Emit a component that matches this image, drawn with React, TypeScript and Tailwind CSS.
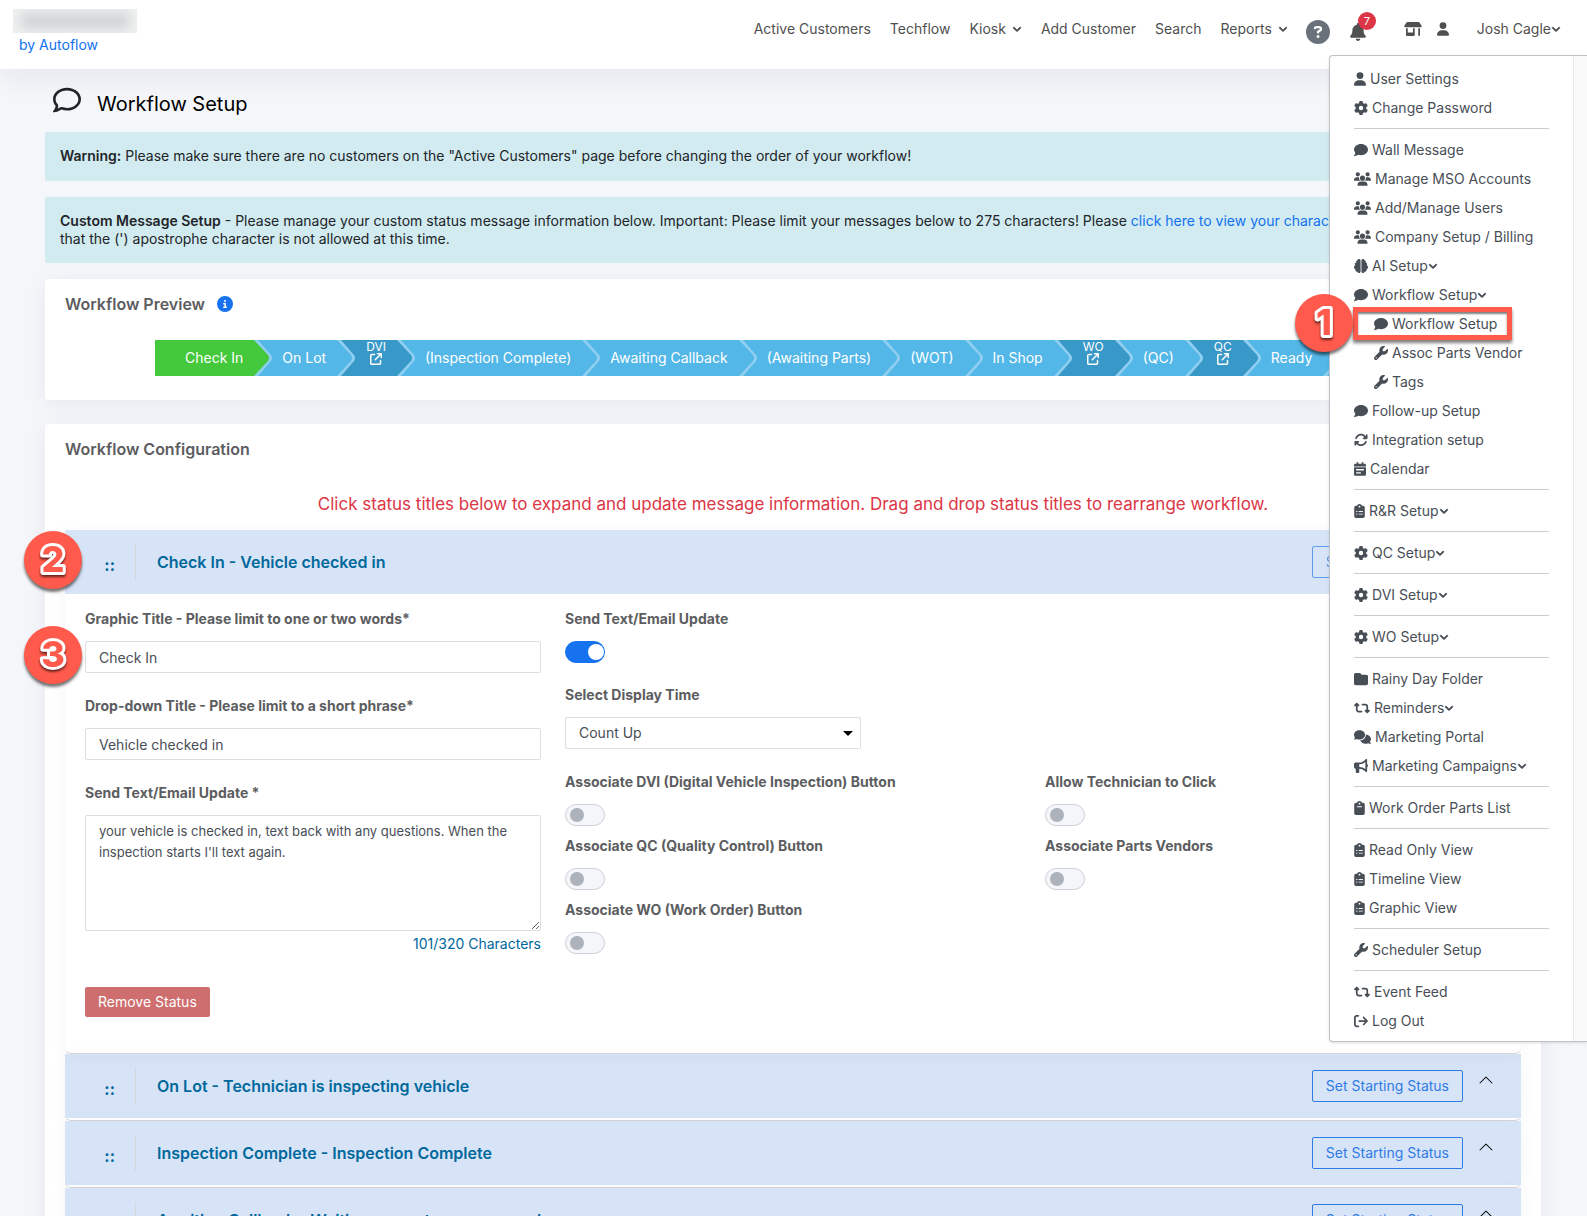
import { useState } from "react";
import type { ReactNode } from "react";
import type { IconType } from "react-icons";
import {
  FaAngleDown,
  FaArrowRightFromBracket,
  FaArrowsRotate,
  FaArrowUpRightFromSquare,
  FaBell,
  FaBrain,
  FaBullhorn,
  FaCircleInfo,
  FaCircleQuestion,
  FaClipboard,
  FaClipboardList,
  FaComment,
  FaComments,
  FaFolder,
  FaGear,
  FaRegComment,
  FaRetweet,
  FaShop,
  FaUser,
  FaUsers,
  FaWrench,
} from "react-icons/fa6";
import { BsChevronUp } from "react-icons/bs";

function CalendarIcon({ className }: { className?: string }) {
  return (
    <svg viewBox="0 0 448 512" fill="currentColor" className={className}>
      <path d="M96 0h64v64h128V0h64v64h48c26 0 48 22 48 48v48H0v-48c0-26 22-48 48-48h48z" />
      <path
        fillRule="evenodd"
        d="M0 192h448v272c0 26-22 48-48 48H48c-26 0-48-22-48-48zM80 260v48h288v-48zM80 376v48h176v-48z"
      />
    </svg>
  );
}

type MenuEntry = {
  label: string;
  icon: IconType | typeof CalendarIcon;
  width?: string; // icon width, square when not given
  caret?: boolean;
  sub?: boolean;
  step?: number;
};

// each inner list is a group, groups are separated by a rule
const menuGroups: MenuEntry[][] = [
  [
    { label: "User Settings", icon: FaUser, width: "w-3" },
    { label: "Change Password", icon: FaGear },
  ],
  [
    { label: "Wall Message", icon: FaComment },
    { label: "Manage MSO Accounts", icon: FaUsers, width: "w-[17px]" },
    { label: "Add/Manage Users", icon: FaUsers, width: "w-[17px]" },
    { label: "Company Setup / Billing", icon: FaUsers, width: "w-[17px]" },
    { label: "AI Setup", icon: FaBrain, caret: true },
    { label: "Workflow Setup", icon: FaComment, caret: true },
    { label: "Workflow Setup", icon: FaComment, sub: true, step: 1 },
    { label: "Assoc Parts Vendor", icon: FaWrench, sub: true },
    { label: "Tags", icon: FaWrench, sub: true },
    { label: "Follow-up Setup", icon: FaComment },
    { label: "Integration setup", icon: FaArrowsRotate },
    { label: "Calendar", icon: CalendarIcon, width: "w-3" },
  ],
  [{ label: "R&R Setup", icon: FaClipboardList, width: "w-[11px]", caret: true }],
  [{ label: "QC Setup", icon: FaGear, caret: true }],
  [{ label: "DVI Setup", icon: FaGear, caret: true }],
  [{ label: "WO Setup", icon: FaGear, caret: true }],
  [
    { label: "Rainy Day Folder", icon: FaFolder },
    { label: "Reminders", icon: FaRetweet, width: "w-4", caret: true },
    { label: "Marketing Portal", icon: FaComments, width: "w-[17px]" },
    { label: "Marketing Campaigns", icon: FaBullhorn, caret: true },
  ],
  [{ label: "Work Order Parts List", icon: FaClipboard, width: "w-[11px]" }],
  [
    { label: "Read Only View", icon: FaClipboardList, width: "w-[11px]" },
    { label: "Timeline View", icon: FaClipboardList, width: "w-[11px]" },
    { label: "Graphic View", icon: FaClipboardList, width: "w-[11px]" },
  ],
  [{ label: "Scheduler Setup", icon: FaWrench }],
  [
    { label: "Event Feed", icon: FaRetweet, width: "w-4" },
    { label: "Log Out", icon: FaArrowRightFromBracket },
  ],
];

const navLinks = [
  { label: "Active Customers" },
  { label: "Techflow" },
  { label: "Kiosk", caret: true },
  { label: "Add Customer" },
  { label: "Search" },
  { label: "Reports", caret: true },
];

const steps = [
  { label: "Check In", kind: "active" },
  { label: "On Lot", kind: "normal" },
  { label: "DVI", kind: "link" },
  { label: "(Inspection Complete)", kind: "normal" },
  { label: "Awaiting Callback", kind: "normal" },
  { label: "(Awaiting Parts)", kind: "normal" },
  { label: "(WOT)", kind: "normal" },
  { label: "In Shop", kind: "normal" },
  { label: "WO", kind: "link" },
  { label: "(QC)", kind: "normal" },
  { label: "QC", kind: "link" },
  { label: "Ready", kind: "normal" },
];

const stepBg: Record<string, string> = {
  active: "bg-[#43c93b] text-[#43c93b] pl-[30px]",
  normal: "bg-[#53b7e8] text-[#53b7e8] pl-7",
  link: "bg-[#3898c8] text-[#3898c8] pl-[29px]",
};

function Marker({ n, className }: { n: number; className: string }) {
  return (
    <span
      className={`absolute z-20 size-[58px] rounded-full bg-[#ff5a4b] shadow-[0_3px_3px_rgba(0,0,0,0.55)] ${className}`}
    >
      <svg viewBox="0 0 58 58" className="size-full drop-shadow-[0_2px_1px_rgba(0,0,0,0.6)]">
        <text
          x="29"
          y="41"
          textAnchor="middle"
          fill="#ff5a4b"
          stroke="#fff"
          strokeWidth="6"
          strokeLinejoin="round"
          paintOrder="stroke"
          className="text-[36px] font-extrabold"
        >
          {n}
        </text>
      </svg>
    </span>
  );
}

function MenuItem({ label, icon: Icon, width = "w-3.5", caret, sub, step }: MenuEntry) {
  return (
    <li className={`relative ${sub ? "pl-5" : ""}`}>
      <a href="#" className="flex items-center gap-1 py-1 leading-[21px] whitespace-nowrap">
        <Icon className={`h-3.5 shrink-0 ${width}`} />
        <span className="flex items-center">
          {label}
          {caret && <FaAngleDown className="size-2.5 stroke-current stroke-[40px]" />}
        </span>
      </a>
      {step && (
        <>
          <span className="absolute -inset-y-0.5 -left-px w-[159px] border-[5px] border-[#ff5a4b] shadow-[0_3px_3px_rgba(0,0,0,0.5),inset_0_2px_2px_rgba(0,0,0,0.5)]" />
          <Marker n={step} className="-top-[15px] -left-[59px]" />
        </>
      )}
    </li>
  );
}

function UserMenu() {
  return (
    <div className="absolute top-[55px] right-0 z-10 flex rounded-l-sm border border-r-0 border-[#bfc2c6] bg-white text-[#484e56] shadow-sm">
      <nav className="w-[243px] px-6 pt-2 pb-1.5">
        {menuGroups.map((group, i) => (
          <ul key={i} className={i > 0 ? "mt-1.5 border-t border-[#cbced1] pt-1.5" : ""}>
            {group.map((entry, j) => (
              <MenuItem key={j} {...entry} />
            ))}
          </ul>
        ))}
      </nav>
      <div className="w-3.5 border-l border-[#e8e8e8] bg-[#fafafa]" />
    </div>
  );
}

function Header() {
  return (
    <header className="relative z-10 flex h-[69px] justify-between bg-white shadow-[0_8px_30px_rgba(20,25,60,0.07)]">
      <div className="pt-[9px] pl-[13px]">
        <div className="h-6 w-[124px] overflow-hidden bg-[#eff0f0]">
          <div className="mx-2 my-1 h-4 bg-[#d0d3d6] blur-[6px]" />
        </div>
        <a href="#" className="block pl-1.5 leading-6 text-[#1271f0]">
          by Autoflow
        </a>
      </div>

      <div className="flex items-start pt-[19px] pr-[26px] text-[#505050]">
        <nav className="flex gap-[19px] leading-5">
          {navLinks.map((link) => (
            <a key={link.label} href="#" className="flex items-center gap-1.5">
              {link.label}
              {link.caret && <FaAngleDown className="size-2.5 stroke-current stroke-[40px]" />}
            </a>
          ))}
        </nav>
        <button type="button" aria-label="Help" className="ml-[18px] pt-px text-[#69727b]">
          <FaCircleQuestion className="size-6" />
        </button>
        <button type="button" aria-label="Notifications" className="relative ml-5 pt-1">
          <FaBell className="h-[18px] w-4" />
          <span className="absolute -top-[7px] left-2 flex size-[18px] items-center justify-center rounded-full bg-[#dc3545] text-[11px] leading-none text-white">
            7
          </span>
        </button>
        <a href="#" aria-label="Shop" className="ml-[38px] pt-[3px]">
          <FaShop className="h-3.5 w-[18px]" />
        </a>
        <a href="#" aria-label="Profile" className="ml-[15px] pt-[3px]">
          <FaUser className="h-3.5 w-3" />
        </a>
        <button type="button" className="ml-7 flex items-center leading-5">
          Josh Cagle
          <FaAngleDown className="size-2.5 stroke-current stroke-[40px]" />
        </button>
      </div>
      <UserMenu />
    </header>
  );
}

function Step({ label, kind }: { label: string; kind: string }) {
  return (
    <li className={`relative flex justify-center pr-[11px] ${stepBg[kind]}`}>
      {kind === "link" ? (
        <a href="#" className="flex flex-col items-center text-xs leading-[13px] text-white">
          {label}
          <FaArrowUpRightFromSquare className="size-3" />
        </a>
      ) : (
        <span className="leading-9 whitespace-nowrap text-white">{label}</span>
      )}
      <svg viewBox="0 0 19 36" className="absolute top-0 left-full z-[1] h-9 w-[19px]">
        <path d="M0 0h4l13 15q2 3 0 6L4 36H0z" fill="#90cff0" />
        <path d="M0 0l14 15q2 3 0 6L0 36z" fill="currentColor" />
      </svg>
    </li>
  );
}

function Card({ children }: { children: ReactNode }) {
  return (
    <section className="rounded bg-white px-5 pt-[13px] pb-6 shadow-[0_4px_24px_rgba(20,25,60,0.06)]">
      {children}
    </section>
  );
}

function RowHeader({ title, disabled }: { title: string; disabled?: boolean }) {
  return (
    <div className="flex h-16 items-center bg-[#d7e4f8] pr-[27px]">
      <span className="w-[70px] cursor-move pt-1.5 pr-5 text-right text-base font-bold text-[#00689b]">
        ::
      </span>
      <h3 className="flex h-9 flex-1 items-center border-l border-[#d3d8e0] pl-[21px] text-base font-semibold text-[#00689b]">
        {title}
      </h3>
      <button
        type="button"
        disabled={disabled}
        className="h-8 rounded-xs border border-[#2f7be5] px-[13px] text-[#2f7be5] disabled:opacity-70"
      >
        Set Starting Status
      </button>
      <button type="button" aria-label="Toggle" className="ml-[15px] pb-3 text-black">
        <BsChevronUp className="size-4" />
      </button>
    </div>
  );
}

const labelClass = "leading-5 font-bold text-[#5c5d60]";
const fieldClass =
  "w-full rounded-xs border border-[#dcdee2] bg-white px-[13px] text-[#484e56]";

function Toggle({ id, label, on = false }: { id: string; label: string; on?: boolean }) {
  const [checked, setChecked] = useState(on);

  return (
    <div className="flex flex-col items-start gap-3">
      <label htmlFor={id} className={labelClass}>
        {label}
      </label>
      <input
        id={id}
        type="checkbox"
        checked={checked}
        onChange={(e) => setChecked(e.target.checked)}
        className="flex h-[22px] w-10 appearance-none items-center rounded-full border border-[#cdd2d8] bg-[#f5f6fa] px-1 before:size-3.5 before:rounded-full before:bg-[#acb3ba] checked:justify-end checked:border-[#1672ef] checked:bg-[#1672ef] checked:px-0 checked:before:size-4 checked:before:bg-white"
      />
    </div>
  );
}

function StatusForm() {
  const [title, setTitle] = useState("Check In");
  const [phrase, setPhrase] = useState("Vehicle checked in");
  const [message, setMessage] = useState(
    "your vehicle is checked in, text back with any questions. When the inspection starts I'll text again."
  );

  return (
    <form className="grid grid-cols-3 px-2 pt-[15px] pb-9">
      <div className="px-3">
        <div className="flex flex-col gap-[23px]">
          <div className="relative flex flex-col gap-3">
            <label htmlFor="graphic" className={labelClass}>
              Graphic Title - Please limit to one or two words*
            </label>
            <input
              id="graphic"
              value={title}
              onChange={(e) => setTitle(e.target.value)}
              className={`h-8 ${fieldClass}`}
            />
            <Marker n={3} className="top-[17px] -left-[61px]" />
          </div>
          <div className="flex flex-col gap-3">
            <label htmlFor="dropdown" className={labelClass}>
              Drop-down Title - Please limit to a short phrase*
            </label>
            <input
              id="dropdown"
              value={phrase}
              onChange={(e) => setPhrase(e.target.value)}
              className={`h-8 ${fieldClass}`}
            />
          </div>
          <div className="flex flex-col">
            <label htmlFor="message" className={labelClass}>
              Send Text/Email Update *
            </label>
            <textarea
              id="message"
              value={message}
              onChange={(e) => setMessage(e.target.value)}
              className={`mt-3 h-[116px] py-[5px] text-[13px] leading-[21px] ${fieldClass}`}
            />
            <p className="mt-[3px] text-right leading-5 text-[#00689b]">101/320 Characters</p>
          </div>
        </div>
        <button
          type="button"
          className="mt-[33px] h-[30px] rounded-xs bg-[#ce6e6e] px-[13px] text-white"
        >
          Remove Status
        </button>
      </div>

      <div className="col-span-2">
        <div className="flex w-1/2 flex-col gap-[22px] px-3">
          <Toggle id="send" label="Send Text/Email Update" on />
          <div className="flex flex-col gap-3">
            <label htmlFor="display" className={labelClass}>
              Select Display Time
            </label>
            <div className="relative w-[296px]">
              <select id="display" className={`h-8 appearance-none ${fieldClass}`}>
                <option>Count Up</option>
              </select>
              <span className="pointer-events-none absolute top-3.5 right-2 border-x-5 border-t-5 border-x-transparent border-t-black" />
            </div>
          </div>
        </div>
        <div className="mt-[23px] grid grid-cols-2 gap-y-2.5 *:px-3">
          <Toggle id="dvi" label="Associate DVI (Digital Vehicle Inspection) Button" />
          <Toggle id="tech" label="Allow Technician to Click" />
          <Toggle id="qc" label="Associate QC (Quality Control) Button" />
          <Toggle id="vendors" label="Associate Parts Vendors" />
          <Toggle id="wo" label="Associate WO (Work Order) Button" />
        </div>
      </div>
    </form>
  );
}

const rowClass = "rounded-b-md border-b border-[#d4d6d6] shadow-[0_2px_20px_rgba(20,25,60,0.04)]";

export default function App() {
  return (
    <div className="h-screen overflow-hidden bg-[#f5f6fa] font-[Inter,sans-serif] text-sm text-[#212529]">
      <Header />

      <main className="pr-[46px] pl-[45px]">
        <div className="flex items-start gap-4 pt-[17px] pb-3.5 pl-2">
          <FaRegComment className="size-7" />
          <h1 className="pt-1 text-xl leading-7 text-black">Workflow Setup</h1>
        </div>

        <div className="flex flex-col gap-4 leading-[18px]">
          <p className="rounded-xs bg-[#d1ebf0] px-[15px] pt-[15px] pb-4">
            <strong className="font-semibold">Warning:</strong> Please make sure there are no
            customers on the "Active Customers" page before changing the order of your workflow!
          </p>
          <p className="rounded-xs bg-[#d1ebf0] px-[15px] py-[15px]">
            <strong className="font-semibold">Custom Message Setup</strong> - Please manage your
            custom status message information below. Important: Please limit your messages below to
            275 characters! Please{" "}
            <a href="#" className="text-[#1271f0]">
              click here to view your character usage report.
            </a>{" "}
            Please note that the (') apostrophe character is not allowed at this time.
          </p>
        </div>

        <div className="mt-4 flex flex-col gap-6">
          <Card>
            <h2 className="flex items-center gap-3 text-base leading-6 font-semibold text-[#5c5d60]">
              Workflow Preview
              <FaCircleInfo className="size-4 text-[#1672ef]" />
            </h2>
            <ol className="mx-[90px] mt-6 flex h-9 bg-[#53b7e8]">
              {steps.map((step, i) => (
                <Step key={i} {...step} />
              ))}
            </ol>
          </Card>

          <Card>
            <h2 className="text-base leading-6 font-semibold text-[#5c5d60]">
              Workflow Configuration
            </h2>
            <p className="mt-[31px] mb-3.5 text-center text-[17px] leading-6 text-[#dc3545]">
              Click status titles below to expand and update message information. Drag and drop
              status titles to rearrange workflow.
            </p>

            <div className={`relative ${rowClass}`}>
              <RowHeader title="Check In - Vehicle checked in" disabled />
              <StatusForm />
              <Marker n={2} className="top-px -left-[41px]" />
            </div>
            <div className={`pb-0.5 ${rowClass}`}>
              <RowHeader title="On Lot - Technician is inspecting vehicle" />
            </div>
            <div className={`pb-0.5 ${rowClass}`}>
              <RowHeader title="Inspection Complete - Inspection Complete" />
            </div>
            <div className={`pb-0.5 ${rowClass}`}>
              <RowHeader title="Awaiting Callback - Waiting on customer approval" />
            </div>
          </Card>
        </div>
      </main>
    </div>
  );
}
